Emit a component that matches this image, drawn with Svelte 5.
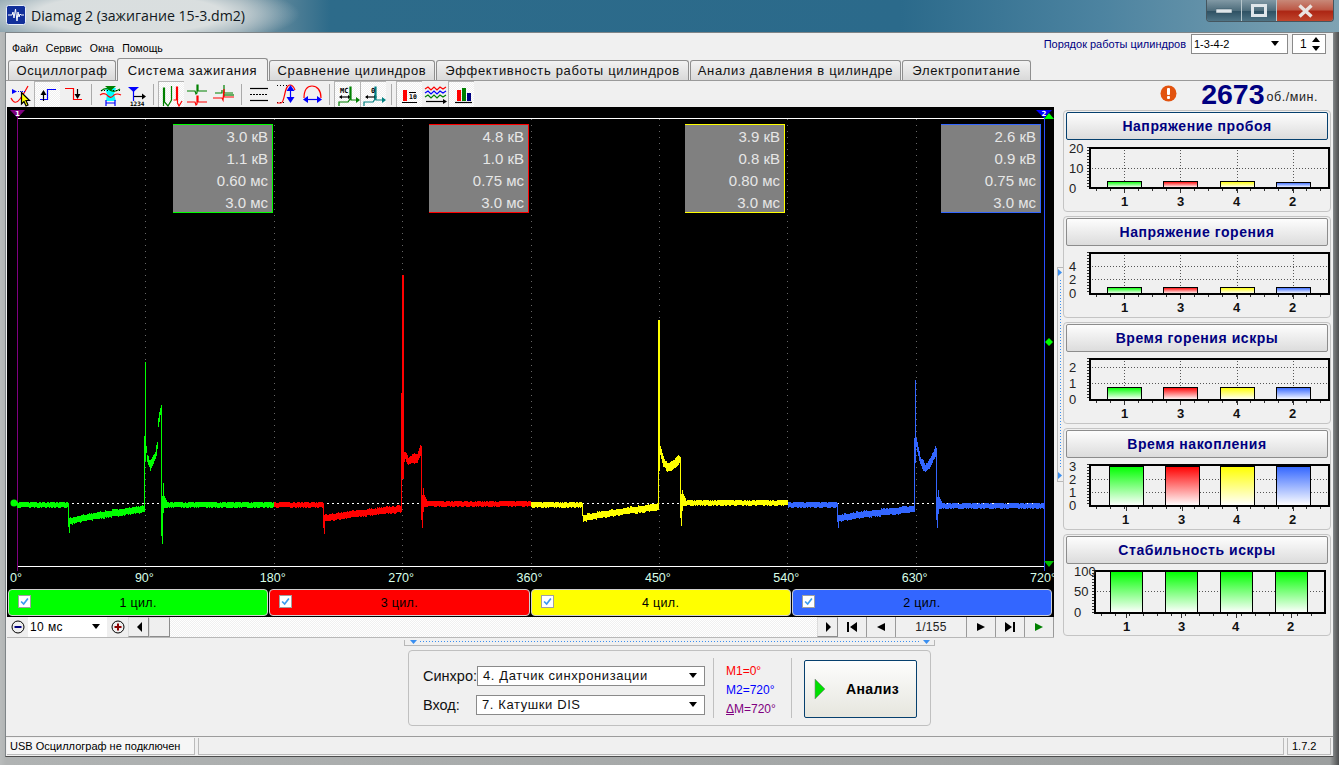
<script>
	// Small seeded generator so the noise on the traces stays the same on every load
	let seed = 7;
	function rnd() {
		seed = (seed * 16807) % 2147483647;
		return seed / 2147483647;
	}

	function interp(points, x) {
		for (let i = 1; i < points.length; i++) {
			if (x <= points[i][0]) {
				let [x0, y0] = points[i - 1];
				let [x1, y1] = points[i];
				return y0 + ((y1 - y0) * (x - x0)) / (x1 - x0);
			}
		}
		return points[points.length - 1][1];
	}

	// One ignition cycle drawn column by column
	function trace(c) {
		let d = "";
		const col = (x, a, b) => (d += `M${x + 0.5} ${Math.round(a)}V${Math.round(b) + 1}`);
		for (let x = c.x0; x < c.x1; x++) {
			let n = rnd();
			if (x < c.drop) {
				let y = 503.5 + (n > 0.8 ? 1 : 0);
				col(x, y - 2, y + (n < 0.3 ? 3 : 2));
			} else if (x == c.drop) {
				col(x, 503, c.low - 6);
			} else if (x == c.drop + 1) {
				col(x, c.a - 4, c.low);
			} else if (x < c.jump) {
				let t = (x - c.drop) / (c.jump - c.drop);
				let y = c.a + (c.b - c.a) * Math.pow(t, 0.75);
				col(x, y - 3 - (n > 0.7 ? 1 : 0), y + 2 + (n < 0.3 ? 1 : 0));
			} else if (x == c.jump) {
				col(x, c.top, c.b + 2);
			} else if (x == c.jump + 1 || (c.wide && x == c.jump + 2)) {
				col(x, c.spike, c.plateau[0][1] + 20);
			} else if (x < c.end) {
				let y = interp(c.plateau, x);
				col(x, y - 3 - n * 2, y + 3 + n * 2);
			} else if (x == c.end) {
				col(x, interp(c.plateau, x) - 1, c.low2 - 8);
			} else if (x == c.end + 1) {
				col(x, c.base - 8, c.low2);
			} else if (x == c.end + 2) {
				col(x, c.over, c.base + 8);
			} else if (x < c.end + 6) {
				col(x, c.base - 14 + (x - c.end) * 2, c.base + 3);
			} else {
				let y = c.base + (n > 0.8 ? 1 : 0);
				col(x, y - 2, y + (n < 0.3 ? 3 : 2));
			}
		}
		return d;
	}

	const cycles = [
		{ color: "#00ff00", x0: 17, x1: 274, drop: 68, low: 532, a: 522, b: 509, jump: 144, top: 436, spike: 362, base: 504, end: 161, low2: 543, over: 483,
			plateau: [[145, 440], [147, 458], [150, 465], [155, 455], [157, 445], [158, 422], [161, 406]] },
		{ color: "#ff0000", x0: 274, x1: 531, drop: 323, low: 533, a: 519, b: 509, jump: 401, top: 393, spike: 275, wide: true, base: 503, end: 421, low2: 527, over: 488,
			plateau: [[403, 458], [405, 455], [408, 461], [412, 458], [417, 458], [421, 447]] },
		{ color: "#ffff00", x0: 531, x1: 788, drop: 582, low: 521, a: 519, b: 507, jump: 658, top: 320, spike: 320, base: 502, end: 680, low2: 525, over: 490,
			plateau: [[660, 450], [663, 461], [667, 467], [672, 465], [680, 458]] },
		{ color: "#3366ff", x0: 788, x1: 1044, drop: 837, low: 527, a: 519, b: 509, jump: 914, top: 438, spike: 380, base: 505, end: 936, low2: 527, over: 490,
			plateau: [[916, 442], [920, 460], [925, 468], [930, 462], [936, 449]] }
	];
	const paths = cycles.map((c) => ({ color: c.color, d: trace(c) }));

	const degrees = [0, 90, 180, 270, 360, 450, 540, 630, 720].map((v, i) => ({
		label: v + "°",
		x: 17 + (i * 1027) / 8
	}));

	const readouts = [
		{ x: 173, color: "#00ff00", rows: ["3.0 кВ", "1.1 кВ", "0.60 мс", "3.0 мс"] },
		{ x: 429, color: "#ff0000", rows: ["4.8 кВ", "1.0 кВ", "0.75 мс", "3.0 мс"] },
		{ x: 685, color: "#ffff00", rows: ["3.9 кВ", "0.8 кВ", "0.80 мс", "3.0 мс"] },
		{ x: 941, color: "#3366ff", rows: ["2.6 кВ", "0.9 кВ", "0.75 мс", "3.0 мс"] }
	];

	const legend = [
		{ text: "1 цил.", cls: "green" },
		{ text: "3 цил.", cls: "red" },
		{ text: "4 цил.", cls: "yellow" },
		{ text: "2 цил.", cls: "blue" }
	];

	const G = "#00ff00", R = "#ff0000", Y = "#ffff00", B = "#3366ff";
	const barColors = [G, R, Y, B];

	// Chart numbers are page pixels, converted to the card's own svg below
	const charts = [
		{ title: "Напряжение пробоя", focus: true, top: 110, x0: 1088, x1: 1327, y0: 147, y1: 187,
			ticks: [["20", 148], ["10", 168], ["0", 188]], grid: [168], cols: [1123, 1179, 1236, 1292],
			bars: [[1106, 181], [1162, 181], [1219, 181], [1275, 182]], bw: 34, names: [1123, 1179, 1235, 1291] },
		{ title: "Напряжение горения", top: 216, x0: 1088, x1: 1327, y0: 252, y1: 293,
			ticks: [["4", 266], ["2", 279], ["0", 293]], grid: [266, 279], cols: [1123, 1179, 1236, 1292],
			bars: [[1106, 287], [1162, 287], [1219, 287], [1275, 287]], bw: 34, names: [1123, 1179, 1235, 1291] },
		{ title: "Время горения искры", top: 322, x0: 1088, x1: 1327, y0: 358, y1: 399,
			ticks: [["2", 367], ["1", 383], ["0", 399]], grid: [367, 383], cols: [1123, 1179, 1236, 1292],
			bars: [[1106, 387], [1162, 387], [1219, 387], [1275, 387]], bw: 34, names: [1123, 1179, 1235, 1291] },
		{ title: "Время накопления", top: 428, x0: 1088, x1: 1327, y0: 464, y1: 505,
			ticks: [["3", 466], ["2", 479], ["1", 492], ["0", 505]], grid: [479, 492], cols: [1125, 1181, 1236, 1292],
			bars: [[1108, 466], [1164, 466], [1219, 466], [1275, 466]], bw: 34, names: [1124, 1180, 1235, 1291] },
		{ title: "Стабильность искры", top: 534, x0: 1093, x1: 1323, y0: 570, y1: 612,
			ticks: [["100", 571], ["50", 591], ["0", 612]], grid: [591], cols: [1125, 1180, 1235, 1290],
			bars: [[1109, 571], [1164, 571], [1219, 571], [1274, 571]], bw: 32, names: [1125, 1180, 1234, 1289], allGreen: true, redCap: 3 }
	];

	function minorTicks(c) {
		let out = [];
		for (let x = c.x0 + 7; x < c.x1; x += 14) out.push(x);
		return out;
	}

	function leftTicks(c) {
		let out = [];
		for (let y = c.y0; y <= c.y1; y += 3) out.push(y);
		return out;
	}

	// Toolbar icons: each shape is [stroke, fill, path], drawn on a 26x26 button
	const K = "#000000", T = "#008080", GD = "#008000", N = "#0000ff";
	const tools = [
		{ shapes: [[R, "none", "M3 17Q7 25 12 18T20 5"], ["none", N, "M4 8L9 10.5L4 13Z"], [N, "none", "M10 10.5H17", "1 1"], [K, Y, "M13.5 11.5V23L16 20.5L18 25L20 24L18 19.5H21.5Z"]] },
		{ on: true, shapes: [[N, "none", "M6 18.5H13.5V8.5H22"], [K, "none", "M9.5 13V20"], ["none", K, "M9.5 9L6.5 14H12.5Z"]] },
		{ shapes: [[R, "none", "M5 7.5H13.5V18.5H22"], [K, "none", "M17.5 8V14"], ["none", K, "M17.5 18L14.5 13H20.5Z"]] },
		{ sep: true },
		{ shapes: [["none", "#00ffff", "M9 7H20L18 13L20 20H10L11 13Z"], [GD, "none", "M5 10Q10 6 14 9Q18 12 24 8"], [R, "none", "M4 14Q9 11 12 15Q15 18 18 14Q21 12 25 14"], [K, "none", "M5 9.5H24", "1 2"], ["none", GD, "M9 5H20L14.5 10Z"], [N, "none", "M10 19V25M19 19V25M10 22H19"]] },
		{ text: [["1234", 8, 25, 6]], shapes: [["none", N, "M6 6H17L11.5 11Z"], [N, "none", "M11.5 10V20"], [K, "none", "M12 15.5H21"], ["none", K, "M20 12.5L24 15.5L20 18.5Z"]] },
		{ sep: true },
		{ on: true, shapes: [[GD, "none", "M5.5 25V7H6.5V21L10 25L13.5 19V5"], [R, "none", "M15.5 19H18.5V6H19.5V22L21 25L24 20"]] },
		{ shapes: [[GD, "none", "M3 10H11L12 13L13 12V4H14V10H23"], [R, "none", "M3 21H11L12 24L13 23V15H14V21H23"]] },
		{ shapes: [[GD, "none", "M5 12H12V9M14 4V12H23"], [R, "none", "M3 17H12L13 19L14 8V16H24"], [GD, "none", "M14 14H24"]] },
		{ sep: true },
		{ shapes: [[K, "none", "M4 7.5H22"], [K, "none", "M4 13.5H22", "2 1"], [K, "none", "M4 19.5H22"]] },
		{ shapes: [[K, "none", "M5 4.5H17M5 21.5H12", "1 2"], [R, "none", "M5 22H9C13 22 12 4 18 4Q21 4 23 9"], [N, "none", "M18.5 7V19"], ["none", N, "M18.5 4L14.5 10H22.5Z"], ["none", N, "M18.5 22L14.5 16H22.5Z"]] },
		{ shapes: [[R, "none", "M6 17C6 9 9 5 14 5C19 5 23 9 23 17"], [N, "none", "M7 18.5H22"], ["none", N, "M5 18.5L10 15V22Z"], ["none", N, "M24 18.5L19 15V22Z"]] },
		{ sep: true },
		{ on: true, text: [["MC", 6, 12, 7]], shapes: [[K, "none", "M6 16H16"], ["none", K, "M5 16L8 14V18Z"], ["none", K, "M17 16L14 14V18Z"], [GD, "none", "M5 25V21H14L16 18V6H17V19H23"], ["none", GD, "M22 16L26 19L22 22Z"]] },
		{ on: true, text: [["0", 11, 12, 7]], shapes: [[K, "none", "M6 16H16"], ["none", K, "M5 16L8 14V18Z"], ["none", K, "M17 16L14 14V18Z"], [T, "none", "M4 25V21H13L15 18V6H16V19H23"], ["none", T, "M22 16L26 19L22 22Z"]] },
		{ sep: true },
		{ on: true, text: [["10", 13, 18, 6.5]], shapes: [["none", R, "M7 9H11V20H7Z"], [K, "none", "M6 21.5H21M13 11.5H20"]] },
		{ shapes: [[R, "none", "M3 8L6 6L9 9L12 6L15 9L18 6L21 8L24 6"], [N, "none", "M3 12L6 10L9 13L12 10L15 13L18 10L21 12L24 10"], [GD, "none", "M3 16L6 14L9 17L12 14L15 17L18 14L21 16L24 14"], [K, "none", "M4 20.5H22"], ["none", K, "M21 18L25 20.5L21 23Z"]] },
		{ on: true, shapes: [["none", R, "M9 9H13V20H9Z"], ["none", GD, "M14 7H18V20H14Z"], ["none", "#000080", "M19 12H23V20H19Z"], [K, "none", "M7 21.5H24"]] }
	];

	const tabs = [
		{ text: "Осциллограф", w: 108 },
		{ text: "Система зажигания", w: 151 },
		{ text: "Сравнение цилиндров", w: 166 },
		{ text: "Эффективность работы цилиндров", w: 253 },
		{ text: "Анализ давления в цилиндре", w: 211 },
		{ text: "Электропитание", w: 129 }
	];
</script>

{#snippet arrow()}
	<svg class="arrow" width="10" height="6" viewBox="0 0 10 6"><path d="M1 0H9L5 5Z" fill="#000" /></svg>
{/snippet}

{#snippet nav(d, color = "#000")}
	<svg width="14" height="12" viewBox="0 0 14 12"><path {d} fill={color} /></svg>
{/snippet}

<div class="app">
	<header class="titlebar">
		<svg class="appicon" width="20" height="20" viewBox="0 0 20 20">
			<rect x="0.5" y="0.5" width="19" height="19" rx="2" fill="#12309a" stroke="#e8eef8" />
			<path d="M2 10H6L7 7L8 13L9.5 4L11 16L12 7L13 12L14 9L15 10H18" fill="none" stroke="#fff" />
		</svg>
		<span class="wintitle">Diamag 2 (зажигание 15-3.dm2)</span>
		<div class="winbtns">
			<div class="wb">
				<svg width="16" height="8" viewBox="0 0 16 8"><rect y="2" width="16" height="4" fill="#dfe6ea" stroke="#31505f" stroke-width="0.5" /></svg>
			</div>
			<div class="wb">
				<svg width="16" height="13" viewBox="0 0 16 13"><rect x="1.5" y="1.5" width="13" height="10" fill="none" stroke="#dfe6ea" stroke-width="3" /></svg>
			</div>
			<div class="wb close">
				<svg width="17" height="14" viewBox="0 0 17 14"><path d="M2.5 1.5L14.5 12.5M14.5 1.5L2.5 12.5" stroke="#e9e3e0" stroke-width="3.4" /></svg>
			</div>
		</div>
	</header>

	<div class="client">
		<div class="toprow">
			<nav class="menu">
				<span>Файл</span><span>Сервис</span><span>Окна</span><span>Помощь</span>
			</nav>
			<div class="order">
				<span class="orderlabel">Порядок работы цилиндров</span>
				<div class="combo ordercombo"><span>1-3-4-2</span>{@render arrow()}</div>
				<div class="combo spin">
					<span>1</span>
					<svg width="10" height="16" viewBox="0 0 10 16"><path d="M1 6L5 1L9 6ZM1 10H9L5 15Z" fill="#000" /></svg>
				</div>
			</div>
		</div>

		<div class="tabs">
			{#each tabs as tab, i}
				<div class="tab" class:active={i == 1} style="width:{tab.w}px">{tab.text}</div>
			{/each}
		</div>

		<div class="toolbar">
			{#each tools as tool}
				{#if tool.sep}
					<div class="sep"></div>
				{:else}
					<div class="tool" class:on={tool.on}>
						<svg width="26" height="26" viewBox="0 0 26 26">
							{#each tool.shapes as s}
								<path d={s[2]} stroke={s[0]} fill={s[1]} stroke-dasharray={s[3]} stroke-width="1.2" />
							{/each}
							{#each tool.text ?? [] as t}
								<text x={t[1]} y={t[2]} font-size={t[3]} class="tooltext">{t[0]}</text>
							{/each}
						</svg>
					</div>
				{/if}
			{/each}
			<div class="rpm">
				<svg class="warn" width="17" height="17" viewBox="0 0 17 17">
					<circle cx="8.5" cy="8.5" r="8" fill="#e2530f" />
					<rect x="7" y="3" width="3" height="7" rx="1" fill="#fff" />
					<rect x="7" y="11" width="3" height="3" rx="1" fill="#fff" />
				</svg>
				<span class="rpmval">2673</span>
				<span class="rpmunit">об./мин.</span>
			</div>
		</div>

		<div class="main">
			<div class="left">
				<div class="scope">
					<svg width="1047" height="482" viewBox="7 107 1047 482">
						<g shape-rendering="crispEdges">
							{#each degrees as d}
								<path d="M{Math.round(d.x) + 0.5} 119V571" stroke="#666" stroke-dasharray="1 5" />
							{/each}
							<path d="M17 118.5H1044M17 566.5H1044" stroke="#fff" />
							<path d="M17.5 116V571" stroke="#800080" />
							<path d="M1044.5 116V571" stroke="#2a4dff" />
							<path d="M17 503.5H1044" stroke="#fff" stroke-dasharray="2 3" />
							{#each paths as p}
								<path d={p.d} stroke={p.color} fill="none" />
							{/each}
						</g>
						<circle cx="14" cy="503" r="3.5" fill="#00ff00" />
						<path d="M10 110H25L17.5 118Z" fill="#800080" />
						<text x="17.5" y="115.5" class="flag">1</text>
						<path d="M1036 110H1052L1044 118Z" fill="#0000ff" />
						<text x="1044" y="115.5" class="flag">2</text>
						<path d="M1049 113L1054 119H1044Z" fill="#00ff00" />
						<path d="M1049 338L1053 342L1049 346L1045 342Z" fill="#00ff00" />
						<path d="M1044 561H1054L1049 567Z" fill="#00c000" />

						{#each readouts as r}
							<rect x={r.x} y="124" width="100" height="89" fill="#808080" />
							<path d="M{r.x} 124.5H{r.x + 99.5}V212.5H{r.x}" stroke={r.color} fill="none" shape-rendering="crispEdges" />
							{#each r.rows as row, i}
								<text x={r.x + 95} y={142 + i * 22} class="readout">{row}</text>
							{/each}
						{/each}

						{#each degrees as d}
							<text x={d.x - 1} y="582" class="deg">{d.label}</text>
						{/each}
					</svg>
					<div class="legend">
						{#each legend as l}
							<div class="chan {l.cls}">
								<span class="check">
									<svg width="11" height="11" viewBox="0 0 13 13"><path d="M2.5 6.5L5.5 9.5L10.5 3" fill="none" stroke="#3a9bf0" stroke-width="2" /></svg>
								</span>
								<span>{l.text}</span>
							</div>
						{/each}
					</div>
				</div>

				<div class="controls">
					<div class="cbtn sq">
						<svg width="14" height="14" viewBox="0 0 14 14"><circle cx="7" cy="7" r="6" fill="none" stroke="#000" /><path d="M3.5 7H10.5" stroke="#000080" stroke-width="2" /></svg>
					</div>
					<div class="timebase"><span>10 мс</span>{@render arrow()}</div>
					<div class="cbtn sq">
						<svg width="14" height="14" viewBox="0 0 14 14"><circle cx="7" cy="7" r="6" fill="none" stroke="#000" /><path d="M3.5 7H10.5M7 3.5V10.5" stroke="#8a0000" stroke-width="2" /></svg>
					</div>
					<div class="cbtn sq raised">{@render nav("M10 1V11L5 6Z")}</div>
					<div class="cbtn sq raised"></div>
					<div class="hatch"></div>
					<div class="cbtn sq raised">{@render nav("M5 1V11L10 6Z")}</div>
					<div class="cbtn wide">{@render nav("M2 1H4V11H2ZM12 1V11L5 6Z")}</div>
					<div class="cbtn wide">{@render nav("M11 2V10L3 6Z")}</div>
					<div class="pos">1/155</div>
					<div class="cbtn wide">{@render nav("M3 2V10L11 6Z")}</div>
					<div class="cbtn wide">{@render nav("M2 1V11L9 6ZM10 1H12V11H10Z")}</div>
					<div class="cbtn wide">{@render nav("M3 2V10L11 6Z", "#008000")}</div>
				</div>
			</div>

			<div class="vsplit">
				<div class="vgrip">
					<svg width="5" height="213" viewBox="0 0 5 213">
						<path d="M0 1L4 4.5L0 8Z" fill="#3a8ff0" />
						<path d="M2.5 12V200" stroke="#3a8ff0" stroke-dasharray="1 2" />
						<path d="M0 204L4 207.5L0 211Z" fill="#3a8ff0" />
					</svg>
				</div>
			</div>

			<aside class="right">
				{#each charts as c, ci}
					{@const oy = c.top + 31}
					<section class="card">
						<div class="cardtitle" class:focus={c.focus}>{c.title}</div>
						<svg width="266" height="70" viewBox="1064 {oy} 266 70">
							<defs>
								{#each barColors as col, bi}
									<linearGradient id="g{ci}{bi}" x1="0" y1="0" x2="0" y2="1">
										<stop offset="0" stop-color={c.allGreen ? G : col} />
										<stop offset="1" stop-color="#fff" />
									</linearGradient>
								{/each}
							</defs>
							<g shape-rendering="crispEdges">
								{#each c.grid as y}
									<path d="M{c.x0} {y + 0.5}H{c.x1}" stroke="#555" stroke-dasharray="1 2" />
								{/each}
								{#each c.cols as x}
									<path d="M{x + 0.5} {c.y0}V{c.y1}" stroke="#555" stroke-dasharray="1 2" />
								{/each}
								{#each minorTicks(c) as x}
									<path d="M{x + 0.5} {c.y1}V{c.y1 + 4}" stroke="#333" />
								{/each}
								{#each c.cols as x}
									<path d="M{x + 0.5} {c.y1}V{c.y1 + 6}" stroke="#333" />
								{/each}
								{#each leftTicks(c) as y}
									<path d="M{c.x0 - 2} {y + 0.5}H{c.x0}" stroke="#333" />
								{/each}
								{#each c.bars as b, bi}
									<rect x={b[0] + 0.5} y={b[1] + 0.5} width={c.bw} height={c.y1 - b[1]} fill="url(#g{ci}{bi})" stroke="#000" />
								{/each}
								{#if c.redCap !== undefined}
									<path d="M{c.bars[c.redCap][0]} {c.y0 + 0.5}H{c.bars[c.redCap][0] + c.bw}" stroke="#ff0000" />
								{/if}
								<rect x={c.x0 + 0.5} y={c.y0 + 0.5} width={c.x1 - c.x0} height={c.y1 - c.y0} fill="none" stroke="#000" stroke-width="2" />
							</g>
							{#each c.ticks as t}
								<text x={c.x0 - 20} y={t[1] + 5} class="ytick">{t[0]}</text>
							{/each}
							{#each c.names as x, i}
								<text x={x + 0.5} y={c.y1 + 19} class="xname">{[1, 3, 4, 2][i]}</text>
							{/each}
						</svg>
					</section>
				{/each}
			</aside>
		</div>

		<div class="hsplit">
			<svg width="529" height="5" viewBox="0 0 529 5">
				<path d="M5 0H12L8.5 4Z" fill="#3a8ff0" />
				<path d="M15 1.5H515" stroke="#3a8ff0" stroke-dasharray="1 2" />
				<path d="M518 0H525L521.5 4Z" fill="#3a8ff0" />
			</svg>
		</div>

		<div class="analysis-wrap">
			<div class="analysis">
				<div class="inputs">
					<label class="field">
						<span>Синхро:</span>
						<div class="combo wide-combo"><span>4. Датчик синхронизации</span>{@render arrow()}</div>
					</label>
					<label class="field">
						<span>Вход:</span>
						<div class="combo wide-combo"><span>7. Катушки DIS</span>{@render arrow()}</div>
					</label>
				</div>
				<div class="marks">
					<span class="m1">М1=0°</span>
					<span class="m2">М2=720°</span>
					<span class="m3"><u>Δ</u>М=720°</span>
				</div>
				<div class="runbtn">
					<svg width="12" height="20" viewBox="0 0 12 20"><path d="M1 0L11 10L1 20Z" fill="#00e000" stroke="#808080" stroke-width="0.6" /></svg>
					<span>Анализ</span>
				</div>
			</div>
		</div>

		<footer class="status">
			<div class="st first">USB Осциллограф не подключен</div>
			<div class="st grow"></div>
			<div class="st last">1.7.2</div>
		</footer>
	</div>
</div>

<style>
	:global(body) {
		margin: 0;
		overflow: hidden;
	}
	.app {
		width: 1339px;
		height: 765px;
		display: flex;
		flex-direction: column;
		font-family: "Liberation Sans", Arial, sans-serif;
		background: linear-gradient(90deg, #b9bcbc 0, #b0b3b3 6px, #9c9f9f 1330px, #4d4f50 1339px);
		overflow: hidden;
	}
	.titlebar {
		height: 32px;
		flex: none;
		display: flex;
		align-items: flex-start;
		padding-left: 6px;
		box-sizing: border-box;
		background:
			radial-gradient(ellipse 170px 34px at 130px 14px, rgba(222, 226, 226, 0.95) 55%, rgba(222, 226, 226, 0) 100%),
			linear-gradient(90deg, #7f9aa6 0, #7f9aa6 240px, #2d6b8a 330px, #2b6a8b 900px, #4c83a0 1100px, #7fa3b3 1339px);
	}
	.appicon {
		margin-top: 5px;
	}
	.wintitle {
		margin: 6px 0 0 5px;
		font: 14.15px "Open Sans", "Noto Sans", sans-serif;
		color: #101820;
		white-space: nowrap;
	}
	.winbtns {
		margin-left: auto;
		margin-right: 5px;
		display: flex;
		height: 22px;
		border: 1px solid #45565f;
		border-top: none;
		border-radius: 0 0 4px 4px;
		overflow: hidden;
		box-sizing: border-box;
		width: 128px;
	}
	.wb {
		width: 34px;
		display: flex;
		align-items: center;
		justify-content: center;
		border-right: 1px solid #b7c6cc;
		background: linear-gradient(#8199a5 0, #4e6d7c 50%, #2f5264 55%, #4f7485 100%);
	}
	.wb.close {
		flex: 1;
		border-right: none;
		background: linear-gradient(#c88878 0, #bd5a48 45%, #ad2614 55%, #c0452c 100%);
	}
	.client {
		flex: none;
		height: 725px;
		margin: 0 5px 0 5px;
		border: 1px solid #7f8588;
		border-bottom-color: #4c4c4c;
		background: #f0f0f0;
		display: flex;
		flex-direction: column;
		box-sizing: border-box;
	}
	.toprow {
		height: 24px;
		flex: none;
		display: flex;
		align-items: center;
		justify-content: space-between;
	}
	.menu {
		display: flex;
		gap: 8px;
		margin: 6px 0 0 6px;
		font-size: 10.5px;
		color: #000;
	}
	.order {
		display: flex;
		align-items: center;
		gap: 4px;
		margin-right: 7px;
		margin-top: -2px;
	}
	.orderlabel {
		font-size: 11px;
		color: #000080;
		margin-right: 1px;
	}
	.combo {
		height: 20px;
		box-sizing: border-box;
		background: #fff;
		border: 1px solid #8a8a8a;
		display: flex;
		align-items: center;
		justify-content: space-between;
		padding: 0 7px 0 2px;
		font-size: 11px;
	}
	.ordercombo {
		width: 97px;
	}
	.spin {
		width: 34px;
		font-size: 12px;
		padding: 0 4px 0 7px;
	}
	.tabs {
		height: 23px;
		flex: none;
		display: flex;
		align-items: flex-end;
		padding-left: 2px;
	}
	.tab {
		height: 20px;
		box-sizing: border-box;
		display: flex;
		align-items: center;
		justify-content: center;
		font-size: 13px;
		letter-spacing: 0.67px;
		color: #111;
		white-space: nowrap;
		background: linear-gradient(#f2f2f2, #d9d9d9);
		border: 1px solid #8e8e8e;
		border-bottom: none;
		border-radius: 3px 3px 0 0;
		margin-right: 1px;
		flex: none;
	}
	.tab.active {
		height: 23px;
		background: #f0f0f0;
		position: relative;
		top: 1px;
		z-index: 1;
	}
	.toolbar {
		height: 27px;
		flex: none;
		box-sizing: border-box;
		display: flex;
		align-items: flex-start;
		padding-left: 2px;
		border-top: 1px solid #9a9a9a;
	}
	.tool {
		width: 26px;
		height: 26px;
		flex: none;
	}
	.tool.on {
		background: repeating-conic-gradient(#fff 0 25%, #f0f0f0 0 50%) 0 0 / 2px 2px;
		box-shadow: inset 1px 1px 0 #b5b5b5;
	}
	.tool svg {
		display: block;
	}
	.tooltext {
		font-family: "DejaVu Sans Mono", monospace;
		font-weight: 700;
		fill: #000;
	}
	.sep {
		width: 1px;
		height: 21px;
		margin: 3px 4px 0 5px;
		background: #a9a9a9;
		flex: none;
	}
	.rpm {
		margin-left: auto;
		display: flex;
		align-items: center;
		height: 26px;
		padding-right: 15px;
		color: #000080;
	}
	.warn {
		margin-right: 24px;
		margin-top: -1px;
	}
	.rpmval {
		font-size: 28.5px;
		font-weight: 700;
		line-height: 26px;
		margin-right: 2px;
	}
	.rpmunit {
		font-size: 12.5px;
		color: #222;
		margin-top: 5px;
		letter-spacing: 0.55px;
	}
	.main {
		height: 532px;
		flex: none;
		display: flex;
		padding-left: 1px;
	}
	.left {
		width: 1047px;
		flex: none;
		display: flex;
		flex-direction: column;
	}
	.scope {
		background: #000;
		height: 510px;
		flex: none;
	}
	.scope svg {
		display: block;
	}
	.flag {
		font: 700 7px "DejaVu Sans", sans-serif;
		fill: #fff;
		text-anchor: middle;
	}
	.readout {
		font-size: 15px;
		fill: #e6e6e6;
		text-anchor: end;
	}
	.deg {
		font-size: 12.5px;
		fill: #d8ffe8;
		text-anchor: middle;
	}
	.legend {
		height: 27px;
		display: flex;
		gap: 1px;
		padding: 0 2px 0 1px;
	}
	.chan {
		flex: 1;
		border-radius: 4px;
		border: 1px solid #d0d0d0;
		box-sizing: border-box;
		display: flex;
		align-items: center;
		justify-content: center;
		font-size: 12.5px;
		letter-spacing: 0.3px;
		color: #000;
		position: relative;
	}
	.chan.green { background: #00ff00; }
	.chan.red { background: #ff0000; }
	.chan.yellow { background: #ffff00; }
	.chan.blue { background: #3366ff; }
	.check {
		position: absolute;
		left: 9px;
		top: 5px;
		width: 11px;
		height: 11px;
		background: #fff;
		border: 1px solid #a0a0a0;
	}
	.check svg {
		display: block;
	}
	.controls {
		height: 21px;
		flex: none;
		display: flex;
		align-items: stretch;
		box-sizing: border-box;
		border-bottom: 1px solid #b8b8b8;
	}
	.cbtn {
		display: flex;
		align-items: center;
		justify-content: center;
		background: #efefef;
		box-sizing: border-box;
		flex: none;
	}
	.cbtn.sq {
		width: 21px;
	}
	.cbtn.raised {
		border: 1px solid #8c8c8c;
		border-left-color: #dcdcdc;
		border-top-color: #dcdcdc;
	}
	.cbtn.wide {
		width: 29px;
		border-right: 1px solid #9a9a9a;
	}
	.timebase {
		width: 79px;
		flex: none;
		background: #fff;
		display: flex;
		align-items: center;
		justify-content: space-between;
		padding: 0 6px 0 2px;
		box-sizing: border-box;
		font-size: 12px;
		letter-spacing: 0.4px;
	}
	.hatch {
		flex: 1;
		background: repeating-conic-gradient(#fff 0 25%, #f0f0f0 0 50%) 0 0 / 2px 2px;
	}
	.pos {
		width: 70px;
		flex: none;
		display: flex;
		align-items: center;
		justify-content: center;
		font-size: 12px;
		letter-spacing: 0.3px;
		color: #222;
		border-right: 1px solid #9a9a9a;
	}
	.vsplit {
		width: 9px;
		flex: none;
		display: flex;
		align-items: flex-start;
		justify-content: center;
		padding-top: 160px;
		box-sizing: border-box;
	}
	.vgrip {
		border: 1px solid #b8b8b8;
		border-right: none;
		height: 213px;
		width: 5px;
		margin-left: 2px;
	}
	.vgrip svg {
		display: block;
	}
	.right {
		width: 268px;
		flex: none;
		padding-top: 3px;
		display: flex;
		flex-direction: column;
		gap: 4px;
	}
	.card {
		height: 102px;
		box-sizing: border-box;
		border: 1px solid #c4c4c4;
		border-radius: 4px;
		padding: 1px 2px 0 2px;
	}
	.card svg {
		display: block;
		margin: 1px 0 0 -1px;
	}
	.cardtitle {
		height: 28px;
		box-sizing: border-box;
		border: 1px solid #8c8c8c;
		border-radius: 2px;
		background: linear-gradient(#fdfdfd, #dcdcdc);
		color: #000080;
		font-size: 14px;
		font-weight: 700;
		letter-spacing: 0.55px;
		display: flex;
		align-items: center;
		justify-content: center;
		padding-bottom: 1px;
	}
	.cardtitle.focus {
		border-color: #06406e;
	}
	.ytick {
		font-size: 13px;
		fill: #222;
	}
	.xname {
		font-size: 13px;
		font-weight: 700;
		fill: #111;
		text-anchor: middle;
	}
	.hsplit {
		height: 7px;
		flex: none;
		margin-top: 1px;
		display: flex;
		justify-content: flex-start;
		padding-left: 398px;
	}
	.hsplit svg {
		display: block;
		border: 1px solid #b8b8b8;
		border-top: none;
	}
	.analysis-wrap {
		flex: none;
		height: 77px;
		margin-top: 3px;
		display: flex;
		justify-content: flex-start;
		padding-left: 402px;
	}
	.analysis {
		width: 523px;
		height: 76px;
		box-sizing: border-box;
		border: 1px solid #c0c0c0;
		border-radius: 4px;
		display: flex;
		align-items: center;
		padding-left: 14px;
	}
	.inputs {
		display: flex;
		flex-direction: column;
		gap: 9px;
		width: 282px;
		flex: none;
		margin-top: 4px;
	}
	.field {
		display: flex;
		align-items: center;
		justify-content: space-between;
		font-size: 14.5px;
		color: #111;
	}
	.wide-combo {
		width: 229px;
		font-size: 13px;
		letter-spacing: 0.6px;
		padding: 0 6px 0 5px;
	}
	.marks {
		margin-left: 8px;
		width: 79px;
		height: 60px;
		flex: none;
		box-sizing: border-box;
		padding-left: 12px;
		border: solid #c0c0c0;
		border-width: 0 1px;
		display: flex;
		flex-direction: column;
		justify-content: space-between;
		font-size: 12px;
		padding-top: 6px;
		padding-bottom: 2px;
	}
	.m1 { color: #ff0000; }
	.m2 { color: #0000ff; }
	.m3 { color: #800080; }
	.runbtn {
		width: 113px;
		height: 58px;
		margin-left: 12px;
		margin-top: 2px;
		flex: none;
		box-sizing: border-box;
		border: 1px solid #06406e;
		border-radius: 2px;
		background: linear-gradient(#fdfdfd, #e6e6de);
		display: flex;
		align-items: center;
		padding-left: 9px;
		gap: 20px;
		font-size: 14px;
		font-weight: 700;
		letter-spacing: 0.4px;
		color: #000;
	}
	.status {
		flex: none;
		margin-top: 9px;
		height: 20px;
		border-top: 1px solid #9c9c9c;
		display: flex;
		gap: 3px;
		padding: 1px 2px 1px 1px;
		box-sizing: border-box;
		font-size: 11px;
		color: #000;
	}
	.st {
		display: flex;
		align-items: center;
		padding-left: 3px;
		box-sizing: border-box;
		border-right: 1px solid #bbb;
		border-bottom: 1px solid #bbb;
	}
	.st.first {
		width: 188px;
		background: #f6f6f6;
	}
	.st.grow {
		flex: 1;
		border-left: 1px solid #bbb;
	}
	.st.last {
		width: 44px;
		padding-left: 4px;
		border-left: 1px solid #bbb;
	}
</style>
